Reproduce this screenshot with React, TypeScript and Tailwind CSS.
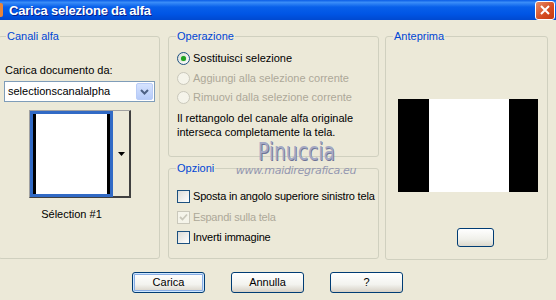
import React from "react";

const font = "font-['Liberation_Sans',Arial,sans-serif]";

const GroupBox: React.FC<{
  title: string;
  className?: string;
  children?: React.ReactNode;
}> = ({ title, className, children }) => (
  <fieldset
    className={`border border-[#D0D0BF] rounded-[3px] min-w-0 ${className ?? ""}`}
  >
    <legend className="ml-[7px] px-[1px] text-[11px] leading-[13px] text-[#0046D5]">
      {title}
    </legend>
    {children}
  </fieldset>
);

const Radio: React.FC<{ checked?: boolean; disabled?: boolean; label: string }> = ({
  checked,
  disabled,
  label,
}) => (
  <div className="flex items-center h-[13px] gap-[3px] whitespace-nowrap">
    <span
      className={`w-[13px] h-[13px] shrink-0 rounded-full border flex items-center justify-center ${
        disabled
          ? "border-[#CAC8BB] bg-[#F5F4EA]"
          : "border-[#1C5180] bg-[linear-gradient(135deg,#DCDCD7,#FFFFFF)]"
      }`}
    >
      {checked && (
        <span className="w-[5px] h-[5px] rounded-full bg-[#21A121] shadow-[0_0_1px_#5DC55D]" />
      )}
    </span>
    <span className={disabled ? "text-[#ACA899]" : "text-black"}>{label}</span>
  </div>
);

const Check: React.FC<{ checked?: boolean; disabled?: boolean; label: string }> = ({
  checked,
  disabled,
  label,
}) => (
  <div className="flex items-center h-[13px] gap-[3px] whitespace-nowrap">
    <span
      className={`w-[13px] h-[13px] shrink-0 border flex items-center justify-center ${
        disabled
          ? "border-[#CAC8BB] bg-[#F5F4EA]"
          : "border-[#1C5180] bg-[linear-gradient(135deg,#DCDCD7,#FFFFFF)]"
      }`}
    >
      {checked && (
        <svg width="9" height="9" viewBox="0 0 9 9">
          <path
            d="M1 4 L3.5 6.5 L8 1.5"
            stroke={disabled ? "#CAC8BB" : "#21A121"}
            strokeWidth="1.8"
            fill="none"
          />
        </svg>
      )}
    </span>
    <span className={`tracking-[-0.2px] ${disabled ? "text-[#ACA899]" : "text-black"}`}>
      {label}
    </span>
  </div>
);

const XpButton: React.FC<{ label: string; isDefault?: boolean }> = ({
  label,
  isDefault,
}) => (
  <button
    type="button"
    className={`w-[73px] h-[21px] rounded-[3px] border border-[#003C74] bg-[linear-gradient(to_bottom,#FFFFFF,#F3F3EF_60%,#D6D0C5)] text-[11px] text-black flex items-center justify-center ${
      isDefault ? "shadow-[inset_0_0_0_1px_#CEE7FF,inset_0_0_0_2px_#89ADE4]" : ""
    }`}
  >
    {label}
  </button>
);

export default function App() {
  return (
    <div
      className={`relative w-[556px] h-[300px] overflow-hidden bg-[#ECE9D8] text-[11px] leading-[13px] ${font}`}
    >
      {/* title bar */}
      <div className="h-[20px] flex items-center bg-[linear-gradient(to_bottom,#0A5CE6,#3A8DF8_12%,#0860EA_35%,#0055E5_70%,#0049D0)]">
        <span className="w-[3px] h-[14px] bg-[#E8843A] rounded-r-[2px]" />
        <span className="ml-[6px] text-[13px] font-bold text-white tracking-[-0.2px] [text-shadow:1px_1px_0_#0A1E8C]">
          Carica selezione da alfa
        </span>
        <span className="ml-auto mr-[1px] w-[20px] h-[19px] rounded-[3px] border border-white bg-[linear-gradient(135deg,#E78B68,#D44A20_60%,#C33A12)] flex items-center justify-center">
          <svg width="10" height="10" viewBox="0 0 10 10">
            <path d="M1 1 L9 9 M9 1 L1 9" stroke="white" strokeWidth="2" />
          </svg>
        </span>
      </div>

      {/* body */}
      <div className="flex pt-[10px]">
        <GroupBox title="Canali alfa" className="-ml-[2px] w-[162px] h-[229px]">
          <div className="pl-[6px] pt-[21px]">Carica documento da:</div>
          <div className="ml-[5px] mt-[4px] w-[151px] h-[21px] border border-[#7F9DB9] bg-white flex items-center">
            <span className="pl-[3px]">selectionscanalalpha</span>
            <span className="ml-auto mr-[1px] w-[17px] h-[17px] rounded-[2px] bg-[linear-gradient(to_bottom,#D6E3FE,#B6CBF9)] border border-[#B9CCF7] flex items-center justify-center">
              <svg width="9" height="6" viewBox="0 0 9 6">
                <path d="M1 1 L4.5 4.5 L8 1" stroke="#4D6185" strokeWidth="2" fill="none" />
              </svg>
            </span>
          </div>
          <div className="ml-[30px] mt-[8px] w-[102px] h-[88px] flex border border-[#404040] border-t-[#A0A0A0] border-l-[#A0A0A0]">
            <div className="w-[83px] h-[86px] border-[3px] border-[#316AC5] bg-white flex justify-between">
              <span className="w-[3px] bg-black" />
              <span className="w-[3px] bg-black" />
            </div>
            <div className="flex-1 border-r border-b border-[#404040] flex items-center justify-center">
              <svg width="7" height="4" viewBox="0 0 7 4">
                <path d="M0 0 H7 L3.5 4 Z" fill="black" />
              </svg>
            </div>
          </div>
          <div className="mt-[10px] ml-[30px] w-[85px] text-center">Sélection #1</div>
        </GroupBox>

        <div className="ml-[8px] w-[211px] flex flex-col gap-[5px]">
          <GroupBox title="Operazione" className="h-[127px]">
            <div className="pl-[8px] pt-[9px] flex flex-col gap-[6.5px]">
              <Radio checked label="Sostituisci selezione" />
              <Radio disabled label="Aggiungi alla selezione corrente" />
              <Radio disabled label="Rimuovi dalla selezione corrente" />
            </div>
            <div className="pl-[8px] pt-[7px] leading-[14px]">
              Il rettangolo del canale alfa originale
              <br />
              interseca completamente la tela.
            </div>
          </GroupBox>
          <GroupBox title="Opzioni" className="h-[97px]">
            <div className="pl-[8px] pt-[15px] flex flex-col gap-[7.5px]">
              <Check label="Sposta in angolo superiore sinistro tela" />
              <Check checked disabled label="Espandi sulla tela" />
              <Check label="Inverti immagine" />
            </div>
          </GroupBox>
        </div>

        <GroupBox title="Anteprima" className="ml-[6px] w-[163px] h-[230px]">
          <div className="ml-[12px] mt-[56px] w-[140px] h-[93px] flex">
            <span className="w-[31px] bg-black" />
            <span className="w-[80px] bg-white" />
            <span className="w-[29px] bg-black" />
          </div>
          <div className="ml-[71px] mt-[36px] w-[37px] h-[19px] rounded-[3px] border border-[#003C74] bg-[linear-gradient(to_bottom,#FFFFFF,#F0F0EA_60%,#DCD8CC)]" />
        </GroupBox>
      </div>

      {/* buttons */}
      <div className="flex pl-[132px] pt-[12px] gap-[26px]">
        <XpButton label="Carica" isDefault />
        <XpButton label="Annulla" />
        <XpButton label="?" />
      </div>

      {/* watermark */}
      <div className="absolute left-[236px] top-[140px] w-[120px] flex flex-col items-center pointer-events-none">
        <span className="text-[24px] leading-[24px] scale-x-[0.78] font-['DejaVu_Sans',sans-serif] text-[#A4A9C4] [text-shadow:1px_1px_0_#6E7396]">
          Pinuccia
        </span>
        <span className="mt-[1px] text-[11px] leading-[11px] italic font-['DejaVu_Sans',sans-serif] text-[#9497B0] tracking-[-0.3px]">
          www.maidiregrafica.eu
        </span>
      </div>
    </div>
  );
}
